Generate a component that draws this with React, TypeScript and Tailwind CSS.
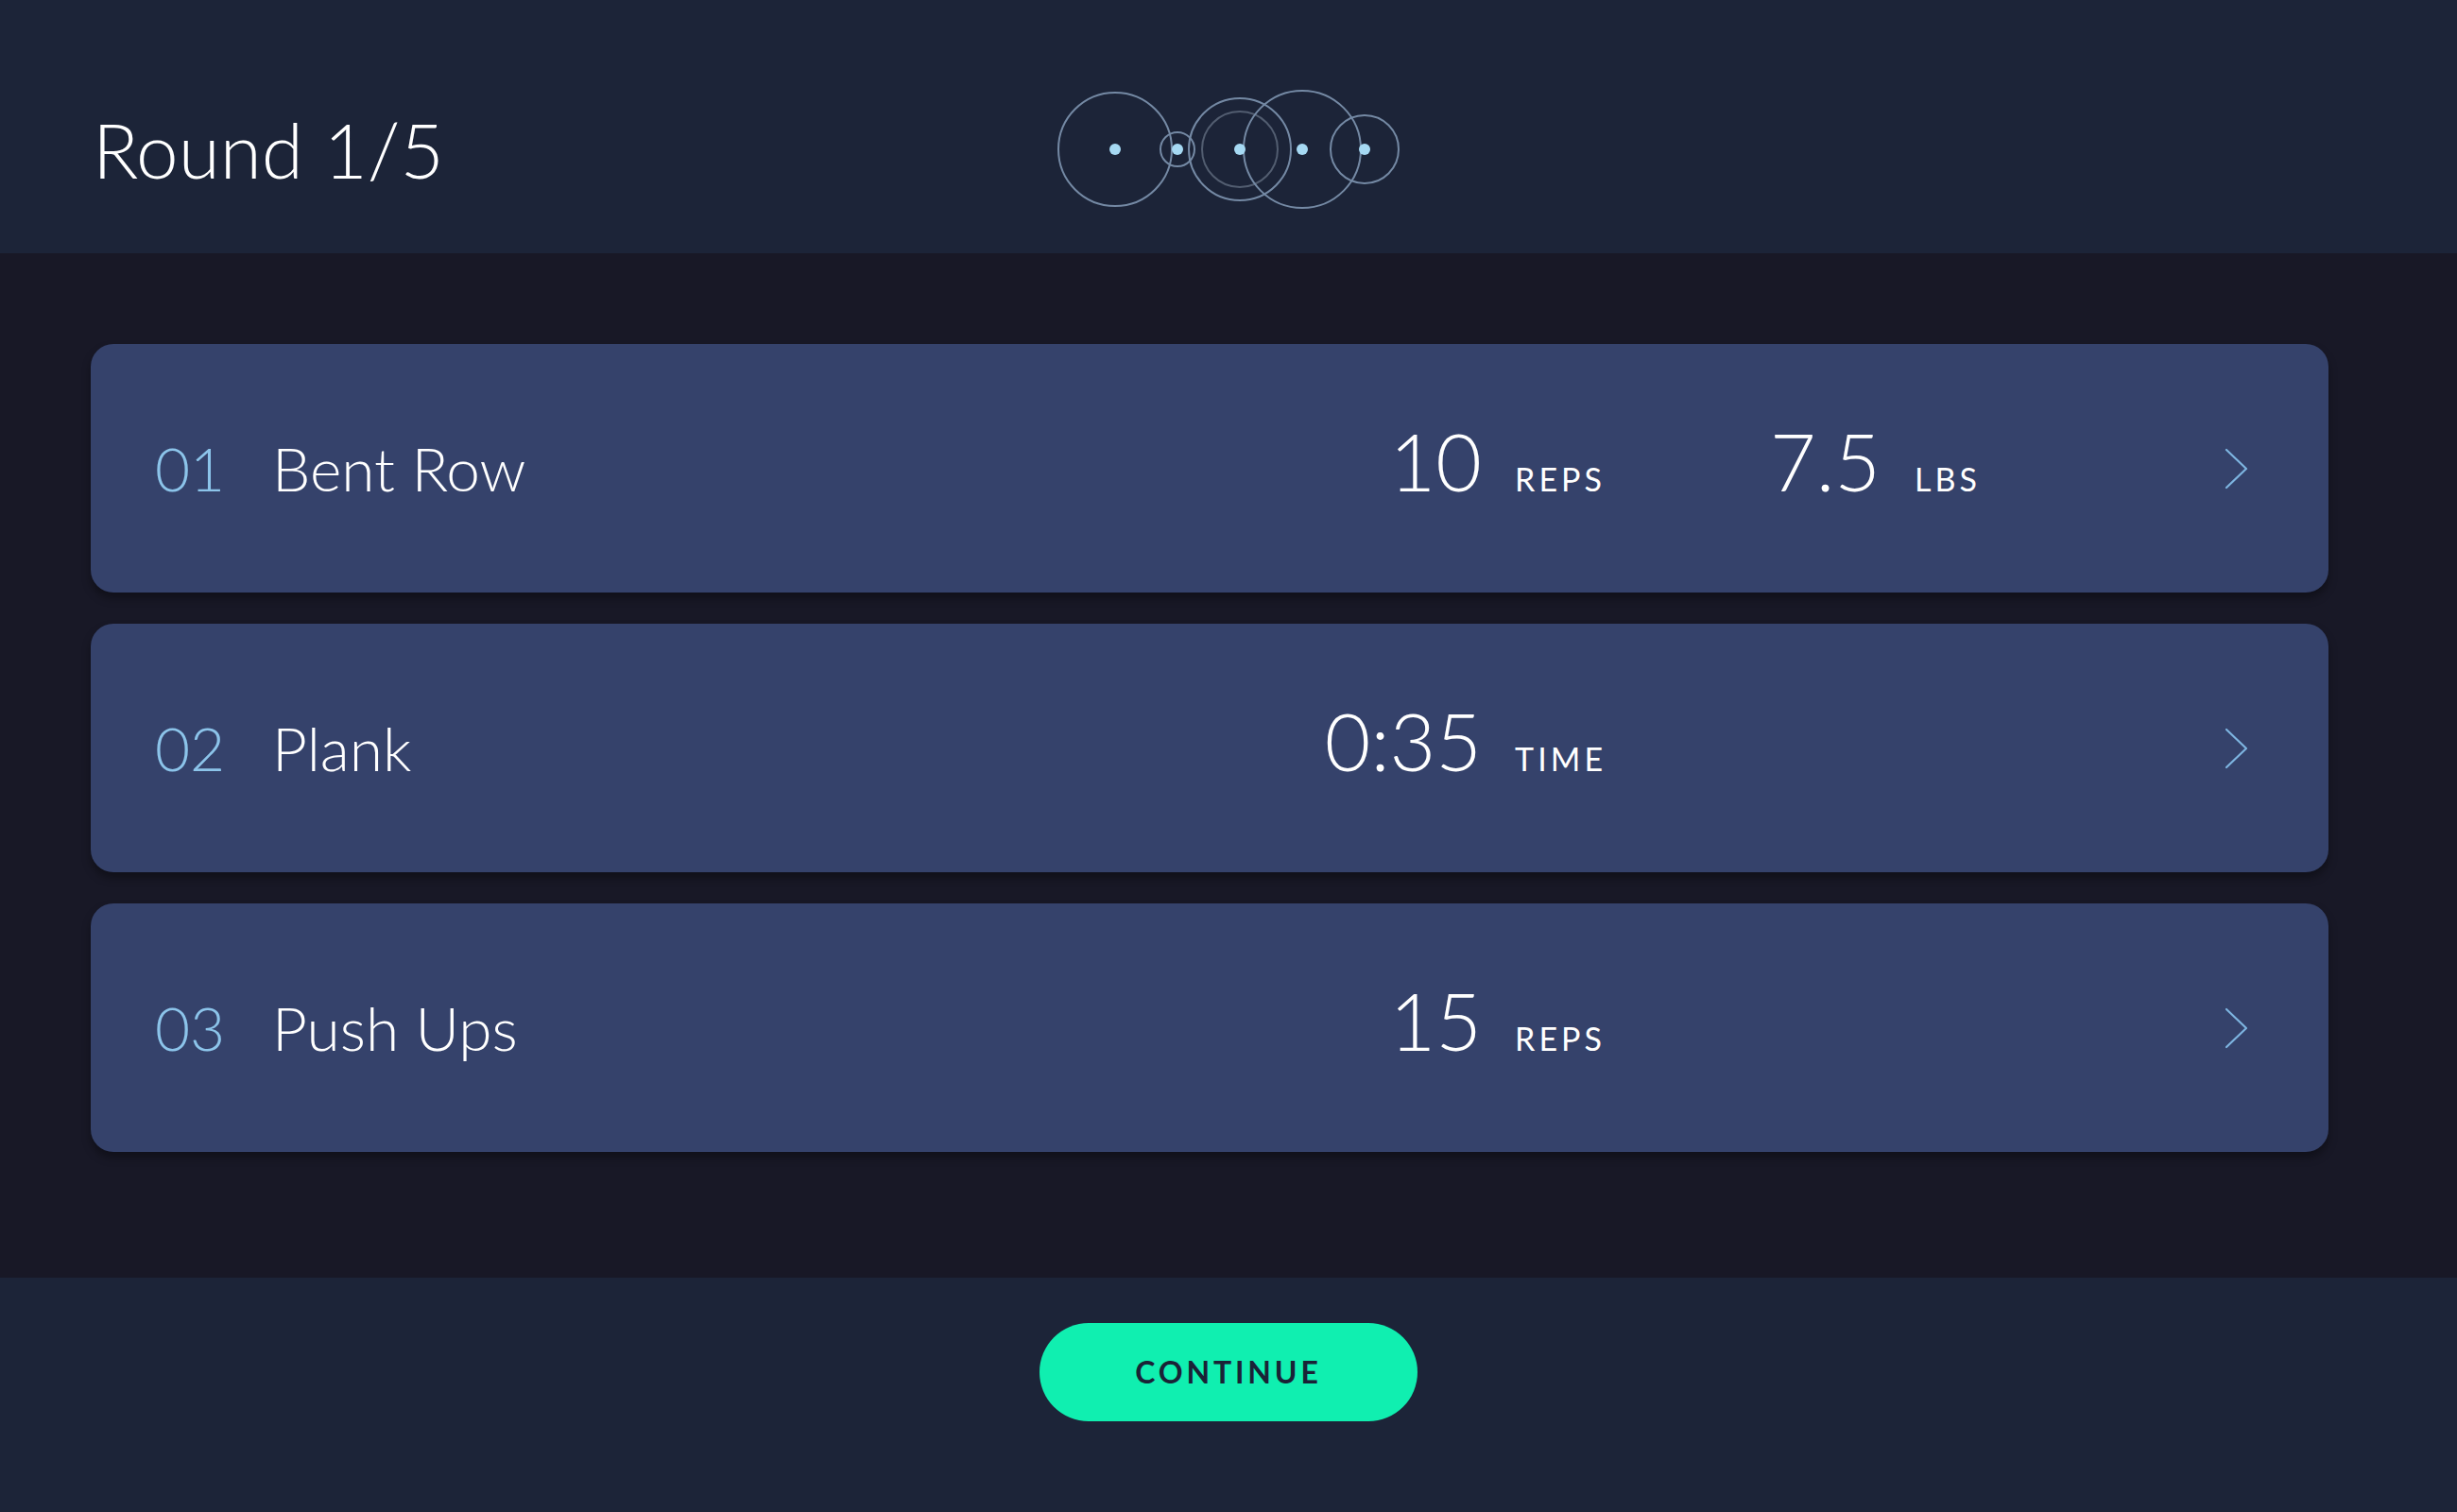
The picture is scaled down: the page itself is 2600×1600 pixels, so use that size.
const exercises = [
  { no: '01', name: 'Bent Row', stats: [{ value: '10', unit: 'REPS' }, { value: '7.5', unit: 'LBS' }] },
  { no: '02', name: 'Plank', stats: [{ value: '0:35', unit: 'TIME' }] },
  { no: '03', name: 'Push Ups', stats: [{ value: '15', unit: 'REPS' }] },
];

function RoundDots() {
  const dots = [62, 128, 194, 260, 326];
  return (
    <svg width="364" height="130" viewBox="0 0 364 130" fill="none">
      <circle cx="62" cy="65" r="60" stroke="#7489a4" strokeWidth="2" />
      <circle cx="128" cy="65" r="18" stroke="#7489a4" strokeWidth="2" />
      <circle cx="194" cy="65" r="54" stroke="#7489a4" strokeWidth="2" />
      <circle cx="194" cy="65" r="40" stroke="#525d70" strokeWidth="2" />
      <circle cx="260" cy="65" r="62" stroke="#7489a4" strokeWidth="2" />
      <circle cx="326" cy="65" r="36" stroke="#7489a4" strokeWidth="2" />
      {dots.map((x) => (
        <circle key={x} cx={x} cy="65" r="6" fill="#a6d9f3" />
      ))}
    </svg>
  );
}

function Chevron() {
  return (
    <svg width="26" height="44" viewBox="0 0 26 44" fill="none">
      <path d="M2 2 L23 22 L2 42" stroke="#7db4e0" strokeWidth="2.2" strokeLinecap="round" strokeLinejoin="round" />
    </svg>
  );
}

export default function App() {
  return (
    <div className="flex h-[1600px] w-full flex-col bg-[#181826] font-['Lato','Noto_Sans',sans-serif] text-white">
      <header className="grid h-[268px] shrink-0 grid-cols-3 items-center bg-[#1c2438] pt-[48px]">
        <h1 className="pl-[98px] text-[80px] font-light leading-none">Round 1/5</h1>
        <div className="flex justify-center">
          <RoundDots />
        </div>
        <div />
      </header>

      <main className="flex flex-1 flex-col gap-[33px] pl-[96px] pr-[136px] pt-[96px]">
        {exercises.map((ex) => (
          <div
            key={ex.no}
            className="flex h-[263px] items-center rounded-[24px] bg-[#35426b] pl-[68px] pr-[84px] shadow-[0_6px_10px_rgba(0,0,0,0.35)]"
          >
            <div className="flex flex-1 items-baseline pb-[16px]">
              <span className="w-[124px] text-[64px] font-light leading-none text-[#8cc4ea]">{ex.no}</span>
              <span className="flex-1 text-[64px] font-light leading-none">{ex.name}</span>
              {ex.stats.map((s, i) => (
                <div key={s.unit} className="flex items-baseline">
                  <span
                    className={
                      i === 0
                        ? 'text-right text-[84px] font-light leading-none'
                        : 'w-[186px] text-right text-[84px] font-light leading-none'
                    }
                  >
                    {s.value}
                  </span>
                  <span
                    className={
                      i === 0
                        ? 'ml-[35px] w-[201px] text-[34px] leading-none tracking-[0.12em]'
                        : 'ml-[36px] w-[328px] text-[34px] leading-none tracking-[0.12em]'
                    }
                  >
                    {s.unit}
                  </span>
                </div>
              ))}
              {ex.stats.length === 1 && <div className="w-[550px]" />}
            </div>
            <Chevron />
          </div>
        ))}
      </main>

      <footer className="flex h-[248px] shrink-0 justify-center bg-[#1c2438] pt-[48px]">
        <button className="flex h-[104px] w-[400px] items-center justify-center rounded-full bg-[#10efb0] text-[32px] font-bold leading-none tracking-[0.12em] text-[#1a2236]">
          CONTINUE
        </button>
      </footer>
    </div>
  );
}
